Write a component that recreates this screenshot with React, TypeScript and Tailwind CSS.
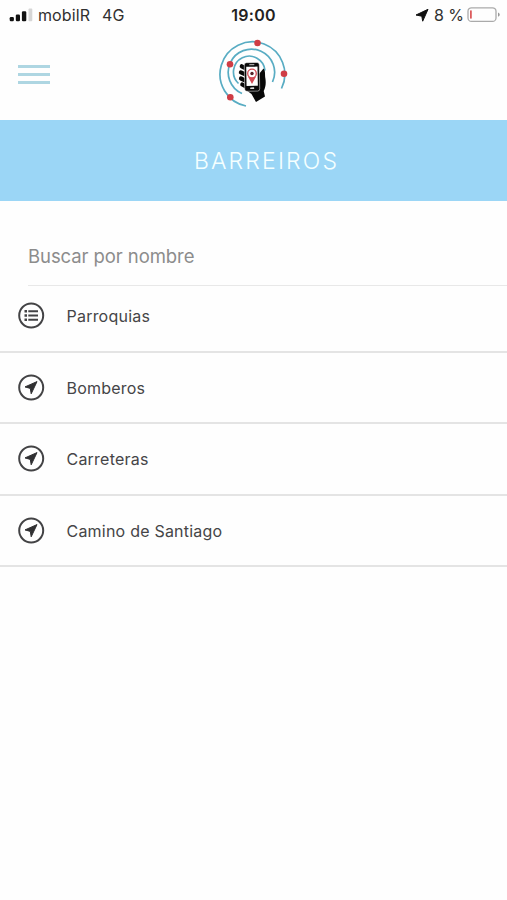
type IconName = "list" | "compass";

const items: { label: string; icon: IconName }[] = [
  { label: "Parroquias", icon: "list" },
  { label: "Bomberos", icon: "compass" },
  { label: "Carreteras", icon: "compass" },
  { label: "Camino de Santiago", icon: "compass" },
];

function RowIcon({ name }: { name: IconName }) {
  return (
    <svg className="h-[27px] w-[27px] shrink-0" viewBox="0 0 27 27" fill="none">
      <circle cx="13.2" cy="13.5" r="12" stroke="#434345" strokeWidth="2" />
      {name === "list" ? (
        <g stroke="#434345" strokeWidth="2">
          <path d="M10.3 9.2h9.7M10.3 13.500h9.700M10.300 17.800h9.700" />
          <path d="M6.500 9.200h2.500M6.500 13.500h2.500M6.500 17.800h2.500" strokeWidth="2.500" />
        </g>
      ) : (
        <path
          d="M19 7.600 7 12.900l5.300 1.500.9 5.400z"
          fill="#303032"
          stroke="#303032"
          strokeWidth="1"
          strokeLinejoin="round"
        />
      )}
    </svg>
  );
}

function Logo() {
  return (
    <svg className="h-[75px] w-[75px]" viewBox="215 35 75 75" fill="none">
      <g stroke="#58acc3" strokeWidth="1.7">
        <path d="M246 106A32.4 32.4 0 1 1 281.5 88.5" />
        <path d="M242 93.500A23.200 23.200 0 1 1 272.500 82" />
        <path d="M238.500 83.500A15.800 15.800 0 1 1 265 70.500" />
      </g>
      <g fill="#cf3d45">
        <circle cx="257.500" cy="43" r="3.300" />
        <circle cx="284" cy="73.700" r="3.300" />
        <circle cx="230" cy="64.200" r="3.300" />
        <circle cx="230.300" cy="97.300" r="3.300" />
      </g>
      <path d="M259 74l4.500-5.500c2.200 2.500 1.200 6 1.900 10 .7 4.500.3 8.500-1.700 12.500l1.300 5.500-9 5.500-4.500-8-5.500-4z" fill="#080808" />
      <path d="m241.800 66.300 4 2.200M240.900 72.400l5 2.300M241 78.500l5 2.300M242.300 84.500l4.500 2.500" stroke="#080808" strokeWidth="4.200" strokeLinecap="round" />
      <g transform="rotate(-1 252 77)">
        <rect x="244.500" y="62.600" width="15" height="28.600" rx="2.200" fill="#090909" stroke="#fff" strokeWidth=".5" />
        <rect x="246.400" y="66.700" width="11.300" height="19.200" fill="#fff" />
        <path d="M249.500 64.700h5" stroke="#ddd" strokeWidth=".9" />
        <rect x="250" y="87.400" width="4" height="1.700" rx=".5" fill="#ddd" />
      </g>
      <path d="M252 84 248.200 77h7.600z" fill="#d34b55" />
      <circle cx="252" cy="73.500" r="4.300" fill="#fff" stroke="#d34b55" strokeWidth="1.300" />
      <circle cx="252" cy="73.500" r="1.700" fill="#552026" />
    </svg>
  );
}

function StatusBar() {
  return (
    <div className="grid h-[30px] grid-cols-3 items-center text-[16px] text-[#303030]">
      <div className="flex items-center pl-[9px]">
        <svg className="h-[14px] w-[24px]" viewBox="0 0 24 14">
          <rect x=".7" y="9" width="4.200" height="4.300" rx="1.200" fill="#111" />
          <rect x="6.800" y="6.500" width="4.200" height="6.800" rx="1.200" fill="#111" />
          <rect x="12.900" y="3.200" width="4.400" height="10.100" rx="1.200" fill="#111" />
          <rect x="19.500" y=".5" width="3.800" height="12.800" rx="1" fill="#d6d6d6" />
        </svg>
        <span className="ml-[5px] tracking-[0.100px]">mobilR</span>
        <span className="ml-[12px]">4G</span>
      </div>
      <div className="text-center font-semibold tracking-[0.300px] text-[#222]">19:00</div>
      <div className="flex items-center justify-end pr-[6px]">
        <svg className="h-[14px] w-[14px]" viewBox="0 0 14 14">
          <path d="M13 1.300 1 7l5.800 1.200.9 5z" fill="#111" stroke="#111" strokeWidth="1" strokeLinejoin="round" />
        </svg>
        <span className="ml-[5px] whitespace-nowrap">8 %</span>
        <svg className="ml-[3px] h-[16px] w-[34px]" viewBox="0 0 34 16" fill="none">
          <rect x="1" y=".8" width="28" height="13.600" rx="3.500" stroke="#aaa" strokeWidth="1.300" />
          <rect x="3" y="3.300" width="1.800" height="8.500" rx=".8" fill="#dc5b5d" />
          <path d="M31 5.600c2.300.8 2.300 3.400 0 4.200z" fill="#999" />
        </svg>
      </div>
    </div>
  );
}

export default function App() {
  return (
    <div className="min-h-[900px] w-full bg-[#fefefe] font-['Inter',sans-serif]">
      <StatusBar />
      <header className="grid h-[90px] grid-cols-3 items-start">
        <button aria-label="Menu" className="ml-[18px] mt-[34.500px] flex w-[32px] flex-col gap-[5px]">
          <span className="h-[3px] w-full bg-[#aed6e2]" />
          <span className="h-[3px] w-full bg-[#aed6e2]" />
          <span className="h-[3px] w-full bg-[#aed6e2]" />
        </button>
        <div className="mt-[5px] flex justify-center pr-[2px]">
          <Logo />
        </div>
      </header>
      <h1 className="flex h-[81px] items-center justify-center bg-[#9bd6f6] pl-[26px] pt-[2px] text-[23px] font-light tracking-[2.150px] text-[#f4ffff]">
        BARREIROS
      </h1>
      <input
        className="ml-[28px] mt-[24px] block h-[61px] w-[479px] border-b border-[#e8e8e8] bg-transparent pt-px text-[18.500px] tracking-[-0.080px] text-[#888] outline-none placeholder:text-[#8c8c8c]"
        placeholder="Buscar por nombre"
      />
      <ul>
        {items.map(({ label, icon }) => (
          <li
            key={label}
            className="flex h-[71.600px] items-center border-b-2 border-[#e4e4e4] pl-[18px] first:h-[66.500px] first:pb-[5px]"
          >
            <RowIcon name={icon} />
            <span className="ml-[21.500px] pt-px text-[16px] tracking-[0.220px] text-[#454547]">{label}</span>
          </li>
        ))}
      </ul>
    </div>
  );
}
